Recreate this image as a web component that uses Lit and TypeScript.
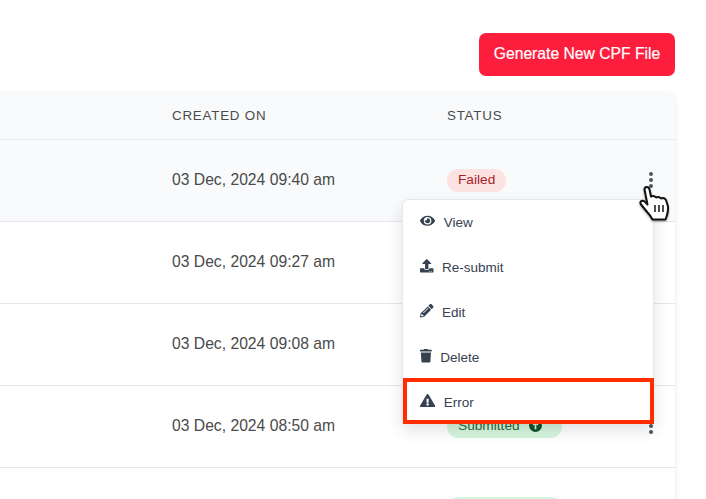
import { LitElement, html, css, svg } from "lit";
import { customElement } from "lit/decorators.js";

const ICONS: Record<string, { w: number; d: string }> = {
  eye: { w: 576, d: "M572.52 241.4C518.29 135.59 410.93 64 288 64S57.68 135.64 3.48 241.41a32.35 32.35 0 0 0 0 29.19C57.71 376.41 165.07 448 288 448s230.32-71.64 284.52-177.41a32.35 32.35 0 0 0 0-29.19zM288 400a144 144 0 1 1 144-144 143.93 143.93 0 0 1-144 144zm0-240a95.31 95.31 0 0 0-25.31 3.79 47.85 47.85 0 0 1-66.9 66.9A95.78 95.78 0 1 0 288 160z" },
  upload: { w: 512, d: "M296 384h-80c-13.3 0-24-10.7-24-24V192h-87.7c-17.8 0-26.7-21.5-14.1-34.1L242.3 5.7c7.5-7.5 19.8-7.5 27.3 0l152.2 152.2c12.6 12.6 3.7 34.1-14.1 34.1H320v168c0 13.3-10.7 24-24 24zm216-8v112c0 13.3-10.7 24-24 24H24c-13.3 0-24-10.7-24-24V376c0-13.3 10.7-24 24-24h136v8c0 30.9 25.1 56 56 56h80c30.9 0 56-25.1 56-56v-8h136c13.3 0 24 10.7 24 24zm-124 88c0-11-9-20-20-20s-20 9-20 20 9 20 20 20 20-9 20-20zm64 0c0-11-9-20-20-20s-20 9-20 20 9 20 20 20 20-9 20-20z" },
  pencil: { w: 512, d: "M497.9 142.1l-46.1 46.1c-4.7 4.7-12.3 4.7-17 0l-111-111c-4.7-4.7-4.7-12.3 0-17l46.1-46.1c18.7-18.7 49.1-18.7 67.9 0l60.1 60.1c18.8 18.7 18.8 49.1 0 67.9zM284.2 99.8L21.6 362.4.4 483.9c-2.9 16.4 11.4 30.6 27.8 27.8l121.5-21.3 262.6-262.6c4.7-4.7 4.7-12.3 0-17l-111-111c-4.8-4.7-12.4-4.7-17.1 0zM124.1 339.9c-5.5-5.5-5.5-14.3 0-19.8l154-154c5.5-5.5 14.3-5.5 19.8 0s5.5 14.3 0 19.8l-154 154c-5.5 5.5-14.3 5.5-19.8 0zM88 424h48v36.3l-64.5 11.3-31.1-31.1L51.7 376H88v48z" },
  trash: { w: 448, d: "M432 32H312l-9.4-18.7A24 24 0 0 0 281.1 0H166.8a23.72 23.72 0 0 0-21.4 13.3L136 32H16A16 16 0 0 0 0 48v32a16 16 0 0 0 16 16h416a16 16 0 0 0 16-16V48a16 16 0 0 0-16-16zM53.2 467a48 48 0 0 0 47.9 45h245.8a48 48 0 0 0 47.9-45L416 128H32z" },
  warn: { w: 576, d: "M569.517 440.013C587.975 472.007 564.806 512 527.94 512H48.054c-36.937 0-59.999-40.055-41.577-71.987L246.423 23.985c18.467-32.009 64.72-31.951 83.154 0l239.94 416.028zM288 354c-25.405 0-46 20.595-46 46s20.595 46 46 46 46-20.595 46-46-20.595-46-46-46zm-43.673-165.346l7.418 136c.347 6.364 5.609 11.346 11.982 11.346h48.546c6.373 0 11.635-4.982 11.982-11.346l7.418-136c.375-6.874-5.098-12.654-11.982-12.654h-63.383c-6.884 0-12.356 5.78-11.981 12.654z" },
};

const icon = (name: string) => {
  const i = ICONS[name];
  return html`<svg class="mi" viewBox="0 0 ${i.w} 512" style="width:${(i.w / 512) * 13.5}px">${svg`<path d=${i.d}></path>`}</svg>`;
};

const kebab = html`<svg class="kebab" viewBox="0 0 4 16"><circle cx="2" cy="2" r="2"></circle><circle cx="2" cy="8" r="2"></circle><circle cx="2" cy="14" r="2"></circle></svg>`;

const MENU = [
  ["eye", "View"],
  ["upload", "Re-submit"],
  ["pencil", "Edit"],
  ["trash", "Delete"],
];

@customElement("app-root")
export class AppRoot extends LitElement {
  static styles = css`
    :host {
      display: block;
      width: 706px;
      height: 499px;
      overflow: hidden;
      position: relative;
      background: #fff;
      font-family: "Liberation Sans", Arial, sans-serif;
      color: #4a4a4a;
    }
    .toolbar {
      display: flex;
      justify-content: flex-end;
      padding: 33px 31px 17px 0;
    }
    .btn {
      height: 43px;
      width: 196px;
      border: 0;
      border-radius: 7px;
      background: #fc1e3c;
      color: #fff;
      font: 500 15.7px "Liberation Sans", Arial, sans-serif;
      -webkit-text-stroke: 0.2px #fff;
      padding: 0 0 2px;
    }
    .card {
      margin-right: 31px;
      border-top-right-radius: 8px;
      box-shadow: 0 1px 5px rgba(0, 0, 0, 0.1);
      background: #fff;
    }
    .row {
      display: grid;
      grid-template-columns: 172px 275px 1fr 48px;
      align-items: center;
      height: 81px;
      border-bottom: 1px solid #e5e7eb;
      font-size: 15.7px;
    }
    .date {
      margin-bottom: 1px;
    }
    .head {
      background: #f9fafb;
      border-top-right-radius: 8px;
      font-size: 13.4px;
      letter-spacing: 0.75px;
      padding-bottom: 2px;
      box-sizing: border-box;
      height: 47px;
    }
    .hover {
      background: #f9fafb;
    }
    .pill {
      display: inline-flex;
      align-items: center;
      gap: 9px;
      box-sizing: border-box;
      height: 23px;
      padding: 0 11px 2px;
      border-radius: 12px;
      font-size: 13.7px;
      vertical-align: middle;
    }
    .failed {
      background: #fde2e2;
      color: #a3232a;
    }
    .ok {
      background: #d6f5de;
      color: #1c6b3a;
      padding-right: 20px;
    }
    .blank {
      width: 115px;
    }
    .ok svg {
      width: 13px;
      height: 13px;
    }
    .kebab {
      width: 4px;
      height: 16px;
      fill: #4b5563;
      display: block;
      margin-left: 22px;
      margin-bottom: 2px;
    }
    .menu {
      position: absolute;
      left: 402px;
      top: 199px;
      width: 250px;
      border: 1px solid #e5e7eb;
      border-bottom: 0;
      border-radius: 6px 6px 0 0;
      background: #fff;
      box-shadow: 0 6px 16px rgba(0, 0, 0, 0.12);
      color: #374151;
      font-size: 13.5px;
    }
    .item {
      display: flex;
      align-items: center;
      gap: 8.5px;
      height: 45px;
      padding-left: 17px;
    }
    .err {
      box-sizing: border-box;
      height: 46px;
      margin-top: -2px;
      margin-right: -1px;
      padding: 2px 0 0 13px;
      border: 4px solid #ff2d00;
    }
    .mi {
      height: 13.5px;
      fill: #374151;
      flex: none;
      margin-top: -3px;
    }
    .cursor {
      position: absolute;
      left: 639px;
      top: 186px;
      width: 31px;
      height: 35px;
      filter: blur(0.4px) drop-shadow(0 1px 1px rgba(0, 0, 0, 0.35));
    }
  `;

  private row(date: string, status: unknown, hover = false) {
    return html`<div class="row ${hover ? "hover" : ""}">
      <span></span><span class="date">${date}</span><span>${status}</span><span>${kebab}</span>
    </div>`;
  }

  render() {
    const submitted = html`<span class="pill ok">Submitted
      <svg viewBox="0 0 14 14"><circle cx="7" cy="7" r="7" fill="#14532d"></circle><path d="M7 11V4M4.5 6.5 7 3.5l2.5 3" stroke="#d6f5de" stroke-width="1.8" fill="none"></path></svg></span>`;
    return html`
      <div class="toolbar"><button class="btn">Generate New CPF File</button></div>
      <div class="card">
        <div class="row head"><span></span><span>CREATED ON</span><span>STATUS</span><span></span></div>
        ${this.row("03 Dec, 2024 09:40 am", html`<span class="pill failed">Failed</span>`, true)}
        ${this.row("03 Dec, 2024 09:27 am", "")}
        ${this.row("03 Dec, 2024 09:08 am", "")}
        ${this.row("03 Dec, 2024 08:50 am", submitted)}
        ${this.row("", html`<span class="pill ok blank"></span>`)}
      </div>
      <div class="menu">
        ${MENU.map(([i, t]) => html`<div class="item">${icon(i)}<span>${t}</span></div>`)}
        <div class="item err">${icon("warn")}<span>Error</span></div>
      </div>
      <svg class="cursor" viewBox="0 0 31 35">
        <path d="M5.5 3.5Q5.5 1 7.7 1T10.5 3.5L12 10.5Q15 9 17 11.5 20 10 22 12.5 25 11 27 14L29 20.5Q29.5 26 26.5 33.5H13.5Q11.5 29.5 8.5 26.5L2 18.5Q.5 16 2.5 15T6.5 16.5L8.5 18.5Z" fill="#fff" stroke="#111" stroke-width="2" stroke-linejoin="round"></path>
        <path d="M16 19v7M20 19v7M24 19v7" stroke="#222" stroke-width="1.6"></path>
      </svg>
    `;
  }
}
